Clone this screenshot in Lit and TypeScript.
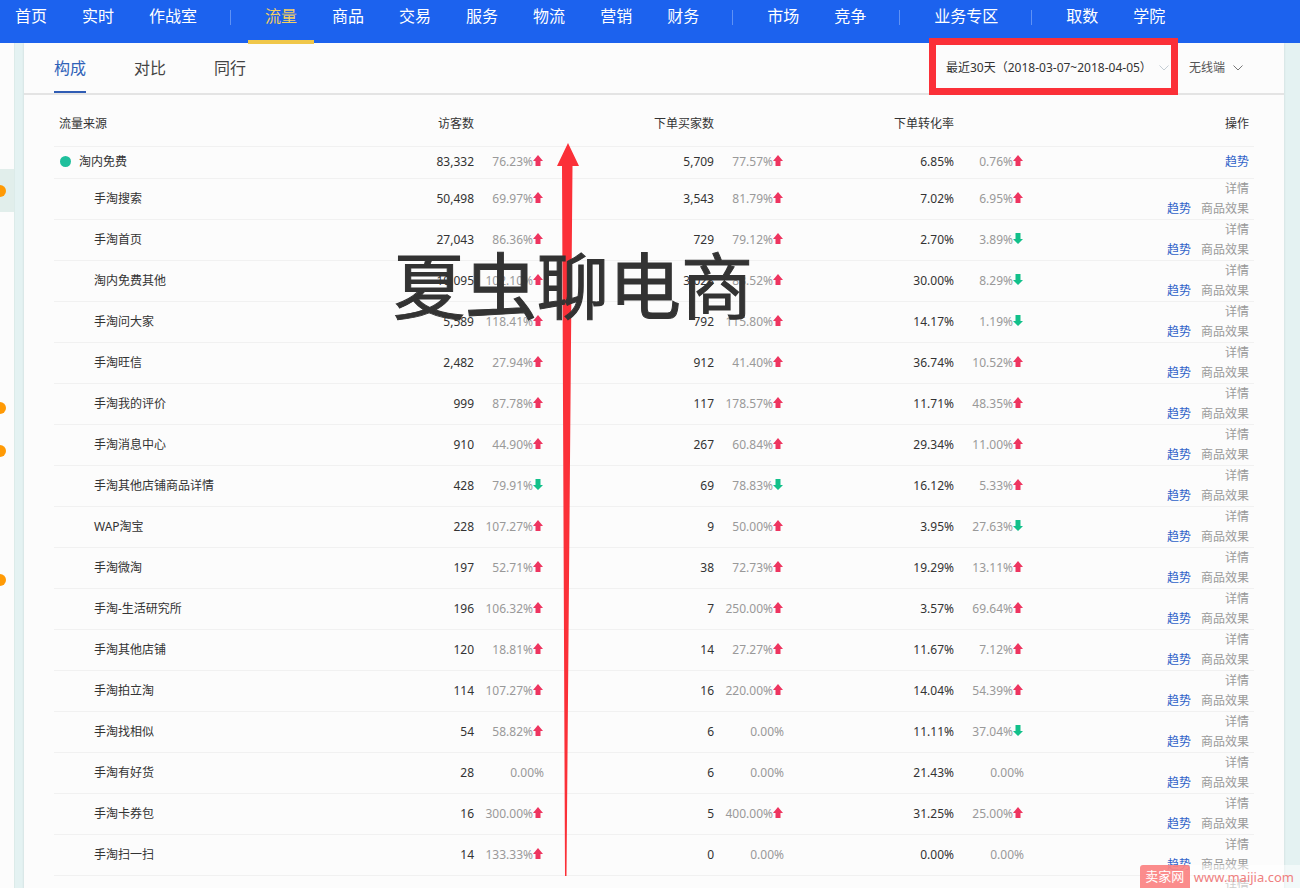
import { LitElement, html, css, svg, nothing } from "lit";
import { customElement, property } from "lit/decorators.js";

interface SourceRow {
  name: string;
  metrics: [string, string, number][];
}

const UP = 1;
const DOWN = -1;
const FLAT = 0;

const TOTAL: SourceRow = {
  name: "淘内免费",
  metrics: [["83,332", "76.23%", UP], ["5,709", "77.57%", UP], ["6.85%", "0.76%", UP]],
};

const ROWS: SourceRow[] = [
  { name: "手淘搜索", metrics: [["50,498", "69.97%", UP], ["3,543", "81.79%", UP], ["7.02%", "6.95%", UP]] },
  { name: "手淘首页", metrics: [["27,043", "86.36%", UP], ["729", "79.12%", UP], ["2.70%", "3.89%", DOWN]] },
  { name: "淘内免费其他", metrics: [["10,095", "102.10%", UP], ["3,028", "83.52%", UP], ["30.00%", "8.29%", DOWN]] },
  { name: "手淘问大家", metrics: [["5,589", "118.41%", UP], ["792", "115.80%", UP], ["14.17%", "1.19%", DOWN]] },
  { name: "手淘旺信", metrics: [["2,482", "27.94%", UP], ["912", "41.40%", UP], ["36.74%", "10.52%", UP]] },
  { name: "手淘我的评价", metrics: [["999", "87.78%", UP], ["117", "178.57%", UP], ["11.71%", "48.35%", UP]] },
  { name: "手淘消息中心", metrics: [["910", "44.90%", UP], ["267", "60.84%", UP], ["29.34%", "11.00%", UP]] },
  { name: "手淘其他店铺商品详情", metrics: [["428", "79.91%", DOWN], ["69", "78.83%", DOWN], ["16.12%", "5.33%", UP]] },
  { name: "WAP淘宝", metrics: [["228", "107.27%", UP], ["9", "50.00%", UP], ["3.95%", "27.63%", DOWN]] },
  { name: "手淘微淘", metrics: [["197", "52.71%", UP], ["38", "72.73%", UP], ["19.29%", "13.11%", UP]] },
  { name: "手淘-生活研究所", metrics: [["196", "106.32%", UP], ["7", "250.00%", UP], ["3.57%", "69.64%", UP]] },
  { name: "手淘其他店铺", metrics: [["120", "18.81%", UP], ["14", "27.27%", UP], ["11.67%", "7.12%", UP]] },
  { name: "手淘拍立淘", metrics: [["114", "107.27%", UP], ["16", "220.00%", UP], ["14.04%", "54.39%", UP]] },
  { name: "手淘找相似", metrics: [["54", "58.82%", UP], ["6", "0.00%", FLAT], ["11.11%", "37.04%", DOWN]] },
  { name: "手淘有好货", metrics: [["28", "0.00%", FLAT], ["6", "0.00%", FLAT], ["21.43%", "0.00%", FLAT]] },
  { name: "手淘卡券包", metrics: [["16", "300.00%", UP], ["5", "400.00%", UP], ["31.25%", "25.00%", UP]] },
  { name: "手淘扫一扫", metrics: [["14", "133.33%", UP], ["0", "0.00%", FLAT], ["0.00%", "0.00%", FLAT]] },
];

@customElement("top-nav")
export class TopNav extends LitElement {
  static styles = css`
    :host {
      display: block;
      height: 43px;
      background: #1c62ee;
      position: relative;
      z-index: 1;
    }
    .list {
      display: flex;
      gap: 1px;
      margin-left: -2px;
      white-space: nowrap;
    }
    .item {
      box-sizing: border-box;
      height: 44px;
      padding: 0 17px;
      font-size: 16px;
      line-height: 32px;
      color: #fff;
      text-decoration: none;
    }
    .active {
      color: #f3cf63;
      border-bottom: 4px solid #f0c74a;
    }
    .divider {
      width: 1px;
      height: 15px;
      margin: 10px 16px 0 15px;
      background: #5f92f5;
    }
  `;

  groups = [
    ["首页", "实时", "作战室"],
    ["流量", "商品", "交易", "服务", "物流", "营销", "财务"],
    ["市场", "竞争"],
    ["业务专区"],
    ["取数", "学院"],
  ];

  render() {
    return html`<nav class="list">
      ${this.groups.map(
        (group, i) => html`${i ? html`<span class="divider"></span>` : nothing}${group.map(
          (label) => html`<a class="item ${label === "流量" ? "active" : ""}" href="#">${label}</a>`
        )}`
      )}
    </nav>`;
  }
}

@customElement("side-menu")
export class SideMenu extends LitElement {
  static styles = css`
    :host {
      display: block;
      background: #fcfcfc;
      border-right: 1px solid #dcebe9;
      padding-top: 126px;
      overflow: hidden;
    }
    .entry {
      display: flex;
      align-items: center;
      height: 43px;
    }
    .current {
      background: #e1eeeb;
    }
    .group {
      margin-bottom: 2px;
    }
    .dot {
      flex: none;
      width: 12px;
      height: 12px;
      margin-left: -6px;
      border-radius: 50%;
      background: #ff9a05;
    }
  `;

  marked = [0, 5, 6, 9];

  render() {
    return Array.from(
      { length: 10 },
      (_, i) => html`<div class="entry ${i === 0 ? "current" : ""} ${i === 2 ? "group" : ""}">
        ${this.marked.includes(i) ? html`<span class="dot"></span>` : nothing}
      </div>`
    );
  }
}

@customElement("pick-list")
export class PickList extends LitElement {
  @property() label = "";
  @property() value = "";

  static styles = css`
    :host {
      display: grid;
      align-items: center;
    }
    .select {
      grid-area: 1 / 1;
      appearance: none;
      border: 0;
      margin: 0;
      padding: 0 17px 0 0;
      background: none;
      font: inherit;
      color: inherit;
      line-height: 20px;
    }
    .chevron {
      grid-area: 1 / 1;
      justify-self: end;
      width: 10px;
      height: 6px;
      pointer-events: none;
      fill: none;
      stroke: var(--chevron, #777);
    }
  `;

  render() {
    return html`<select class="select" aria-label=${this.label}>
        <option>${this.value}</option>
      </select>
      <svg class="chevron" viewBox="0 0 10 6"><path d="M.5 .5 5 5 9.500 .5" /></svg>`;
  }
}

@customElement("source-table")
export class SourceTable extends LitElement {
  static styles = css`
    :host {
      display: block;
      padding: 6px 30px 0;
    }
    .table {
      width: 100%;
      table-layout: fixed;
      border-collapse: collapse;
      font-size: 12px;
      line-height: 20px;
      color: #333;
    }
    .c-name {
      width: 250px;
    }
    .c-value {
      width: 170px;
    }
    .c-change {
      width: 70px;
    }
    th,
    td {
      padding: 0;
      font-weight: 400;
      text-align: right;
      border-bottom: 1px solid #f1f1f1;
      white-space: nowrap;
    }
    .head th {
      height: 45px;
    }
    .total th,
    .total td {
      height: 29px;
      padding-bottom: 2px;
    }
    .row th,
    .row td {
      height: 40px;
    }
    .table .name {
      text-align: left;
      padding-left: 5px;
    }
    .row .name {
      padding-left: 40px;
    }
    .bullet {
      display: inline-block;
      width: 11px;
      height: 11px;
      margin: 0 8px 0 1px;
      border-radius: 50%;
      background: #1fbf9c;
      vertical-align: -1px;
    }
    .change {
      color: #999;
    }
    .arrow {
      width: 10px;
      height: 12px;
      margin-right: 1px;
      vertical-align: -1px;
      fill: #ee3560;
    }
    .down {
      fill: #12c08a;
    }
    .table .ops {
      padding-right: 5px;
    }
    .link {
      color: #999;
      text-decoration: none;
    }
    .trend {
      color: #2f62c8;
    }
    .pair {
      display: flex;
      justify-content: flex-end;
      gap: 10px;
    }
  `;

  arrow(dir: number) {
    if (dir === FLAT) return nothing;
    const shape =
      dir === UP
        ? svg`<path d="M5 0 10 6H7.500V11H2.500V6H0Z" />`
        : svg`<path d="M5 11 10 6H7.500V0H2.500V6H0Z" />`;
    return html`<svg class="arrow ${dir === DOWN ? "down" : ""}" viewBox="0 0 10 12">${shape}</svg>`;
  }

  cells(row: SourceRow) {
    return row.metrics.map(
      ([value, change, dir]) => html`<td>${value}</td><td class="change">${change}${this.arrow(dir)}</td>`
    );
  }

  render() {
    return html`<table class="table">
      <colgroup>
        <col class="c-name" />
        <col class="c-value" /><col class="c-change" />
        <col class="c-value" /><col class="c-change" />
        <col class="c-value" /><col class="c-change" />
        <col />
      </colgroup>
      <thead>
        <tr class="head">
          <th class="name">流量来源</th>
          ${["访客数", "下单买家数", "下单转化率"].map((t) => html`<th>${t}</th><th></th>`)}
          <th class="ops">操作</th>
        </tr>
      </thead>
      <tbody>
        <tr class="total">
          <th class="name"><span class="bullet"></span>${TOTAL.name}</th>
          ${this.cells(TOTAL)}
          <td class="ops"><a class="link trend" href="#">趋势</a></td>
        </tr>
        ${ROWS.map(
          (row) => html`<tr class="row">
            <th class="name">${row.name}</th>
            ${this.cells(row)}
            <td class="ops">
              <a class="link" href="#">详情</a>
              <div class="pair">
                <a class="link trend" href="#">趋势</a>
                <a class="link" href="#">商品效果</a>
              </div>
            </td>
          </tr>`
        )}
        <tr class="row">
          <td colspan="7"></td>
          <td class="ops"><a class="link" href="#">详情</a><div>&nbsp;</div></td>
        </tr>
      </tbody>
    </table>`;
  }
}

@customElement("app-root")
export class AppRoot extends LitElement {
  static styles = css`
    :host {
      display: flex;
      flex-direction: column;
      height: 100vh;
      overflow: hidden;
      position: relative;
      background: #e4f2f2;
      font-family: "Noto Sans", "Noto Sans CJK SC", sans-serif;
      font-size: 12px;
      color: #333;
    }
    .body {
      flex: 1;
      min-height: 0;
      display: grid;
      grid-template-columns: 15px minmax(0, 1fr);
      column-gap: 9px;
      padding-right: 16px;
    }
    .panel {
      background: #fcfcfc;
      box-shadow: 0 0 2px #c8d4d4;
    }
    .bar {
      display: flex;
      align-items: center;
      height: 50px;
      padding: 0 41px 0 30px;
      border-bottom: 2px solid #e4e4e4;
    }
    .tabs {
      display: flex;
      gap: 48px;
      margin-right: auto;
    }
    .tab {
      box-sizing: border-box;
      height: 50px;
      padding: 0;
      border: 0;
      border-bottom: 2px solid transparent;
      background: none;
      font: inherit;
      font-size: 16px;
      color: #444;
    }
    .on {
      color: #2f62b8;
      border-color: #2f5cb4;
    }
    .range {
      position: relative;
      z-index: 2;
      margin-right: 20px;
      --chevron: #c4cdd4;
    }
    .frame {
      position: absolute;
      inset: -20px -9px -17px -17px;
      border: 7px solid #fb3038;
      pointer-events: none;
    }
    .device {
      color: #555;
    }
    .pointer {
      position: absolute;
      left: 557px;
      top: 143px;
      width: 22px;
      height: 733px;
      fill: #fb3038;
    }
    .title-mark {
      position: absolute;
      left: 393px;
      top: 233px;
      font-size: 72px;
      line-height: 104px;
      color: #333;
      -webkit-text-stroke: 1px #333;
      white-space: nowrap;
    }
    .site-mark {
      position: absolute;
      right: 0;
      bottom: 0;
      display: flex;
      align-items: center;
      height: 23px;
      padding-right: 6px;
      gap: 4px;
      background: rgba(255, 255, 255, 0.5);
      font-size: 13px;
      color: #ef8080;
    }
    .badge {
      width: 50px;
      line-height: 23px;
      border-radius: 3px 3px 0 0;
      background: rgba(250, 120, 120, 0.85);
      color: #fff;
      text-align: center;
    }
  `;

  render() {
    return html`
      <top-nav></top-nav>
      <div class="body">
        <side-menu></side-menu>
        <main class="panel">
          <header class="bar">
            <div class="tabs">
              <button class="tab on">构成</button>
              <button class="tab">对比</button>
              <button class="tab">同行</button>
            </div>
            <div class="range">
              <pick-list label="日期" value="最近30天（2018-03-07~2018-04-05）"></pick-list>
              <span class="frame"></span>
            </div>
            <pick-list class="device" label="终端" value="无线端"></pick-list>
          </header>
          <source-table></source-table>
        </main>
      </div>
      <svg class="pointer" viewBox="0 0 22 733"><path d="M11 0 22 23H15.500L9.500 733H8L5 23H0Z" /></svg>
      <div class="title-mark">夏虫聊电商</div>
      <div class="site-mark"><span class="badge">卖家网</span><span>www.maijia.com</span></div>
    `;
  }
}
